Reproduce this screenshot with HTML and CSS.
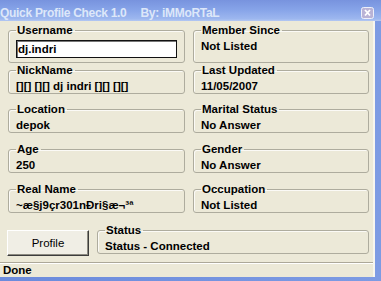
FILE: index.html
```html
<!DOCTYPE html>
<html lang="en">
<head>
    <meta charset="UTF-8">
    <title>Quick Profile Check 1.0</title>
    <link rel="stylesheet" href="styles.css">
</head>
<body>
    <div class="window">
        <div class="titlebar">
            <span class="title">Quick Profile Check 1.0</span>
            <span class="author">By: iMMoRTaL</span>
            <span class="close">
                <svg width="13" height="12" viewBox="0 0 13 12">
                    <rect x="0.5" y="0.5" width="12" height="11" rx="2" fill="#b9b3d6" stroke="#eef0fa"/>
                    <path d="M4 3 L9 8.5 M9 3 L4 8.5" stroke="#fff" stroke-width="1.8"/>
                </svg>
            </span>
        </div>
        <div class="frame">
            <div class="client">
                <div class="fields">
                    <fieldset class="group tall">
                        <legend>Username</legend>
                        <input type="text" class="textbox" value="dj.indri">
                    </fieldset>
                    <fieldset class="group tall">
                        <legend>Member Since</legend>
                        <div class="value">Not Listed</div>
                    </fieldset>

                    <fieldset class="group">
                        <legend>NickName</legend>
                        <div class="value">[][] [][] dj indri [][] [][]</div>
                    </fieldset>
                    <fieldset class="group">
                        <legend>Last Updated</legend>
                        <div class="value">11/05/2007</div>
                    </fieldset>

                    <fieldset class="group">
                        <legend>Location</legend>
                        <div class="value">depok</div>
                    </fieldset>
                    <fieldset class="group">
                        <legend>Marital Status</legend>
                        <div class="value">No Answer</div>
                    </fieldset>

                    <fieldset class="group">
                        <legend>Age</legend>
                        <div class="value">250</div>
                    </fieldset>
                    <fieldset class="group">
                        <legend>Gender</legend>
                        <div class="value">No Answer</div>
                    </fieldset>

                    <fieldset class="group">
                        <legend>Real Name</legend>
                        <div class="value">~æ§j9çr301nÐri§æ¬³ª</div>
                    </fieldset>
                    <fieldset class="group">
                        <legend>Occupation</legend>
                        <div class="value">Not Listed</div>
                    </fieldset>
                </div>

                <div class="actions">
                    <button class="btn">Profile</button>
                    <fieldset class="group status">
                        <legend>Status</legend>
                        <div class="value">Status - Connected</div>
                    </fieldset>
                </div>

                <div class="statusbar">Done</div>
            </div>
        </div>
    </div>
</body>
</html>
```

FILE: styles.css
```css
body {
    margin: 0;
    padding: 0;
    background-color: #ece9d8;
    font-family: "Liberation Sans", Arial, sans-serif;
    font-size: 11.5px;
}
.window {
    width: 381px;
    height: 281px;
    overflow: hidden;
}
.titlebar {
    height: 21px;
    display: flex;
    align-items: center;
    background: linear-gradient(#7893de, #86a3e8 45%, #9db7ef 90%, #b4c8f2);
    color: #dde7f9;
    font-weight: bold;
    font-size: 12px;
    letter-spacing: -0.3px;
    white-space: nowrap;
}
.title {
    padding-top: 4px;
}
.author {
    margin-left: 14px;
    padding-top: 4px;
}
.close {
    margin-left: auto;
    margin-right: 7px;
    padding-top: 5px;
    display: flex;
}
.frame {
    height: 260px;
    background: linear-gradient(90deg, #6b8bdc, #7d9be3);
    padding-right: 6px;
}
.client {
    width: 373px;
    height: 256px;
    background-color: #ece9d8;
    border-right: 2px solid #f6f5ef;
}
.fields {
    display: grid;
    grid-template-columns: 177px 176px;
    grid-template-rows: 40px 39px 40px 40px 40px;
    column-gap: 8px;
    padding: 3px 0 0 8px;
}
.group {
    margin: 0;
    padding: 0 7px;
    min-width: 0;
    height: 30px;
    box-sizing: border-box;
    border: 1px solid #aeac9e;
    border-radius: 3px;
    box-shadow: inset 1px 1px 0 #fbfaf6;
}
.group.tall {
    height: 39px;
}
.group legend {
    padding: 0 2px 0 1px;
    line-height: 13px;
    font-weight: bold;
    color: #000;
}
.value {
    margin-top: 3px;
    line-height: 13px;
    font-weight: bold;
    color: #000;
    white-space: nowrap;
}
.textbox {
    display: block;
    margin-top: 3px;
    width: 161px;
    height: 18px;
    box-sizing: border-box;
    padding: 0 1px;
    border: 1px solid #111;
    box-shadow: inset 1px 1px 0 #777;
    background-color: #fff;
    font-family: "Liberation Sans", Arial, sans-serif;
    font-size: 11.5px;
    font-weight: bold;
    color: #000;
}
.actions {
    display: flex;
    align-items: flex-start;
    gap: 8px;
    height: 33px;
    padding-left: 7px;
}
.btn {
    margin-top: 7px;
    width: 82px;
    height: 26px;
    padding: 0;
    background-color: #f0eee5;
    border: 1px solid;
    border-color: #fff #3c3c3c #3c3c3c #fff;
    box-shadow: inset -1px -1px 0 #8c8a80;
    font-family: "Liberation Sans", Arial, sans-serif;
    font-size: 11.5px;
    color: #000;
}
.group.status {
    margin-top: 1px;
    width: 272px;
    height: 30px;
}
.statusbar {
    margin-top: 6px;
    padding: 1px 0 0 3px;
    line-height: 13px;
    border-top: 1px solid #aca899;
    box-shadow: inset 0 1px 0 #fff;
    font-weight: bold;
    color: #000;
}
```
